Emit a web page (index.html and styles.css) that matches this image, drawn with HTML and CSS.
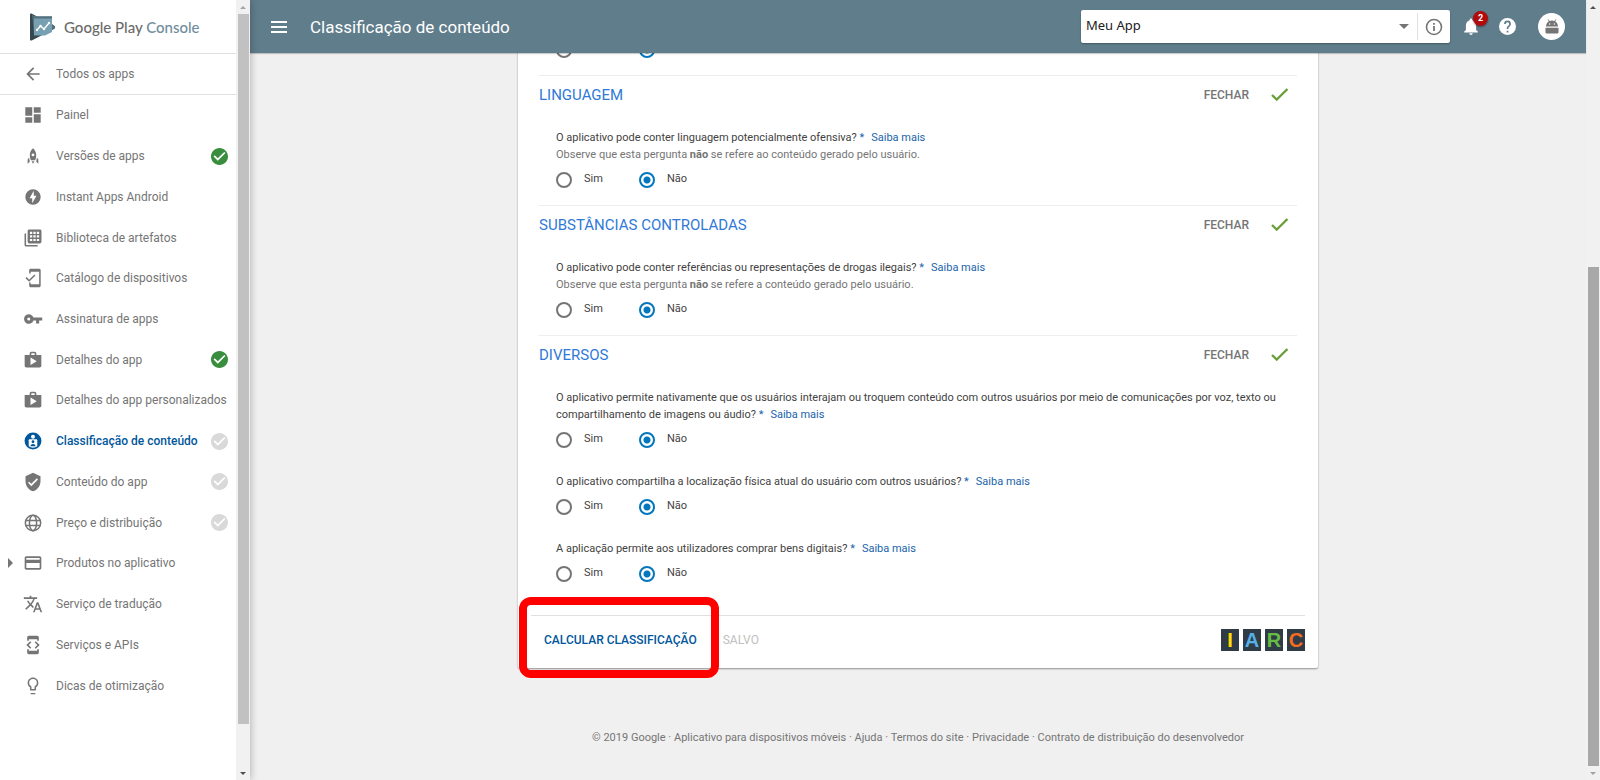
FILE: index.html
```html
<!DOCTYPE html>
<html lang="pt-BR">
<head>
<meta charset="utf-8">
<title>Classificação de conteúdo - Google Play Console</title>
<link rel="stylesheet" href="styles.css">
</head>
<body>
<svg class="sprite" aria-hidden="true">
  <symbol id="badge" viewBox="2 2 20 20"><path d="M12 2C6.500 2 2 6.500 2 12s4.500 10 10 10 10-4.500 10-10S17.500 2 12 2zm-2 15l-5-5 1.400-1.400L10 14.200l7.600-7.600L19 8l-9 9z"/></symbol>
  <symbol id="shop" viewBox="0 0 24 24"><path d="M16 6V4c0-1.100-.9-2-2-2h-4c-1.100 0-2 .9-2 2v2H2v13c0 1.100.9 2 2 2h16c1.100 0 2-.9 2-2V6h-6zm-6-2h4v2h-4V4zM9 18V9l7.500 4.500L9 18z"/></symbol>
  <symbol id="tick" viewBox="3 5 19 14"><path d="M9 15.800L4.800 11.600l-1.800 1.800L9 19.200 21.400 7l-1.800-1.800z"/></symbol>
</svg>
<div class="app">
  <aside class="sidebar">
    <div class="sidebar-body">
      <a class="brand" href="#">
        <svg class="brand-logo" viewBox="0 0 25 28"><path fill="#37474f" d="M1.500 0.500C.5.200 0 .8 0 2v24c0 1.200.6 1.900 1.700 1.500L24 16c1.300-.8 1.300-2.500 0-3.200z"/><path fill="#546e7a" d="M2 .5L4 3.500h18V11l2 1.400c1.300.8 1.300 2.500 0 3.200L22 17 4 22z"/><path fill="#78a0b3" d="M4 3.500h18V19l-7 3.500H4z"/><path fill="#546e7a" d="M4 3.500h18v2H4z"/><path fill="none" stroke="#fff" stroke-width="1.300" d="M7 17l3.500-4 3.500 3 5-6"/><g fill="#fff"><circle cx="7" cy="17" r="1.200"/><circle cx="10.500" cy="13" r="1.200"/><circle cx="14" cy="16" r="1.200"/><circle cx="19" cy="10" r="1.200"/></g></svg>
        <span>Google Play <span class="brand-sub">Console</span></span>
      </a>
      <a class="nav-item back" href="#"><svg class="icon" viewBox="0 0 24 24"><path d="M20 11H7.800l5.600-5.600L12 4l-8 8 8 8 1.400-1.400L7.800 13H20z"/></svg><span>Todos os apps</span></a>
      <nav class="nav">
        <a class="nav-item" href="#"><svg class="icon" viewBox="-1 -1 26 26"><path d="M2 13h9V2H2v11zm0 9h9v-7H2v7zm11 0h9V11h-9v11zm0-20v7h9V2h-9z"/></svg><span>Painel</span></a>
        <a class="nav-item" href="#"><svg class="icon" viewBox="-2 -2 28 28"><path fill-rule="evenodd" d="M12 1C9 3.500 7.500 7 7.500 11c0 2.600.5 5 1.500 7h6c1-2 1.500-4.400 1.500-7 0-4-1.500-7.500-4.500-10zm0 7.500a2 2 0 1 1 0 4 2 2 0 0 1 0-4zM6.500 14L4.500 17v6l3-3zM17.500 14l2 3v6l-3-3zM10 19.500h4L12 23z"/></svg><span>Versões de apps</span><svg class="status done"><use href="#badge"/></svg></a>
        <a class="nav-item" href="#"><svg class="icon" viewBox="-1 -1 26 26"><path fill-rule="evenodd" d="M12 2a10 10 0 1 0 0 20 10 10 0 0 0 0-20zm-1 18v-6.500H7.500L13 4v6.500h3.500z"/></svg><span>Instant Apps Android</span></a>
        <a class="nav-item" href="#"><svg class="icon" viewBox="-1 -1 26 26"><path fill-rule="evenodd" d="M1 6h2v15h15v2H3c-1.100 0-2-.9-2-2zM7 1h14c1.100 0 2 .9 2 2v14c0 1.100-.9 2-2 2H7c-1.100 0-2-.9-2-2V3c0-1.100.9-2 2-2zm1 3v2.700h3V4zm4.500 0v2.700h3V4zM17 4v2.700h3V4zM8 8.500v3h3v-3zm4.500 0v3h3v-3zm4.500 0v3h3v-3zM8 13.300V16h3v-2.700zm4.500 0V16h3v-2.700zm4.500 0V16h3v-2.700z"/></svg><span>Biblioteca de artefatos</span></a>
        <a class="nav-item" href="#"><svg class="icon" viewBox="-1 -1 26 26"><path d="M20 0H9C7.900 0 7 .9 7 2v4h2V4h11v16H9v-2H7v4c0 1.100.9 2 2 2h11c1.100 0 2-.9 2-2V2c0-1.100-.9-2-2-2z"/><path fill="none" stroke="currentColor" stroke-width="2" d="M3 11.500l4 4L14.500 8"/></svg><span>Catálogo de dispositivos</span></a>
        <a class="nav-item" href="#"><svg class="icon" viewBox="-1 -1 26 26"><path fill-rule="evenodd" d="M12.600 10A6.300 6.300 0 1 0 12.600 14H16v4h4v-4h4v-4zM6.500 14a2 2 0 1 1 0-4 2 2 0 0 1 0 4z"/></svg><span>Assinatura de apps</span></a>
        <a class="nav-item" href="#"><svg class="icon"><use href="#shop"/></svg><span>Detalhes do app</span><svg class="status done"><use href="#badge"/></svg></a>
        <a class="nav-item" href="#"><svg class="icon"><use href="#shop"/></svg><span>Detalhes do app personalizados</span></a>
        <a class="nav-item active" href="#"><svg class="icon" viewBox="-2 -2 28 28"><circle cx="12" cy="12" r="11.800"/><circle cx="12" cy="6" r="2.800" fill="#fff"/><path fill="#fff" d="M7.500 9.500h9c1 0 1.500.6 1.500 1.500v8.500c-3.500 2.500-8.500 2.500-12 0V11c0-.9.500-1.500 1.500-1.500z"/><circle cx="12" cy="13" r="2"/><path d="M8.500 19.500c0-4.500 7-4.500 7 0z"/></svg><span>Classificação de conteúdo</span><svg class="status"><use href="#badge"/></svg></a>
        <a class="nav-item" href="#"><svg class="icon" viewBox="0 0 24 24"><path d="M12 1L3 5v6c0 5.500 3.800 10.700 9 12 5.200-1.300 9-6.500 9-12V5l-9-4zm-2 16l-4-4 1.400-1.400L10 14.200l6.600-6.600L18 9l-8 8z"/></svg><span>Conteúdo do app</span><svg class="status"><use href="#badge"/></svg></a>
        <a class="nav-item" href="#"><svg class="icon" viewBox="0 0 24 24"><g fill="none" stroke="currentColor" stroke-width="1.800"><circle cx="12" cy="12" r="9.200"/><ellipse cx="12" cy="12" rx="4.300" ry="9.200"/><path d="M3 9h18M3 15h18"/></g></svg><span>Preço e distribuição</span><svg class="status"><use href="#badge"/></svg></a>
        <a class="nav-item expandable" href="#"><svg class="icon" viewBox="0 0 24 24"><path d="M20 4H4c-1.100 0-2 .9-2 2v12c0 1.100.9 2 2 2h16c1.100 0 2-.9 2-2V6c0-1.100-.9-2-2-2zm0 14H4v-6h16v6zm0-10H4V6h16v2z"/></svg><span>Produtos no aplicativo</span></a>
        <a class="nav-item" href="#"><svg class="icon" viewBox="0 0 24 24"><path d="M12.870 15.070l-2.540-2.510.03-.03A17.500 17.500 0 0 0 14.070 6H17V4h-7V2H8v2H1v2h11.200a15.700 15.700 0 0 1-3.200 5.400A15.600 15.600 0 0 1 6.700 8h-2c.7 1.600 1.700 3.200 3 4.600L2.600 17.600 4 19l5-5 3.100 3.100zM18.500 10h-2L12 22h2l1.100-3h4.800l1.100 3h2zm-2.600 7l1.600-4.300 1.600 4.300z"/></svg><span>Serviço de tradução</span></a>
        <a class="nav-item" href="#"><svg class="icon" viewBox="0 0 24 24"><path d="M7 5h10v2h2V3c0-1.100-.9-2-2-2H7c-1.100 0-2 .9-2 2v4h2zm8.400 11.600L20 12l-4.600-4.600L14 8.800l3.200 3.200-3.200 3.200zM10 15.200L6.800 12 10 8.800 8.600 7.400 4 12l4.600 4.600zM17 19H7v-2H5v4c0 1.100.9 2 2 2h10c1.100 0 2-.9 2-2v-4h-2z"/></svg><span>Serviços e APIs</span></a>
        <a class="nav-item" href="#"><svg class="icon" viewBox="-1 -1 26 26"><path fill-rule="evenodd" d="M9 21h6v1.800H9zM12 1C8.100 1 5 4.100 5 8c0 2.400 1.200 4.500 3 5.700V17c0 .6.400 1 1 1h6c.6 0 1-.4 1-1v-3.300c1.800-1.200 3-3.300 3-5.700 0-3.900-3.100-7-7-7zm2.800 11.100l-.8.600V16h-4v-3.300l-.8-.6A5 5 0 0 1 7 8a5 5 0 0 1 10 0 5 5 0 0 1-2.200 4.100z"/></svg><span>Dicas de otimização</span></a>
      </nav>
    </div>
    <div class="scrollbar side-scroll"><i class="arrow up muted"></i><i class="thumb"></i><i class="arrow down"></i></div>
  </aside>

  <div class="main">
    <header class="topbar">
      <button class="icon-btn menu" aria-label="Menu"><svg viewBox="0 0 16 12"><path d="M0 1h16M0 6h16M0 11h16" stroke="currentColor" stroke-width="1.800"/></svg></button>
      <h1>Classificação de conteúdo</h1>
      <div class="app-picker">
        <select aria-label="Aplicativo"><option>Meu App</option></select>
        <button class="icon-btn info" aria-label="Informações"><svg viewBox="0 0 18 18"><circle cx="9" cy="9" r="7.500" fill="none" stroke="currentColor" stroke-width="1.600"/><path fill="currentColor" d="M8.100 8h1.800v5H8.100zM8.100 5h1.800v1.800H8.100z"/></svg></button>
      </div>
      <button class="icon-btn bell" aria-label="Notificações"><svg viewBox="4 2 16 20"><path fill="currentColor" d="M12 22c1.100 0 2-.9 2-2h-4c0 1.100.9 2 2 2zm6-6v-5c0-3.100-1.600-5.600-4.500-6.300V4a1.500 1.500 0 0 0-3 0v.7C7.600 5.400 6 7.900 6 11v5l-2 2v1h16v-1z"/></svg><span class="count">2</span></button>
      <button class="icon-btn help" aria-label="Ajuda"><svg viewBox="2 2 20 20"><path fill="currentColor" d="M12 2a10 10 0 1 0 0 20 10 10 0 0 0 0-20zm1 17h-2v-2h2v2zm2.100-7.700l-.9.900c-.8.700-1.200 1.300-1.200 2.800h-2v-.5c0-1.100.5-2.100 1.200-2.800l1.200-1.300c.4-.3.600-.8.600-1.400a2 2 0 0 0-4 0H8a4 4 0 0 1 8 0c0 .9-.4 1.700-.9 2.300z"/></svg></button>
      <button class="icon-btn avatar" aria-label="Conta"><svg viewBox="0 0 14 15"><path fill="#757575" fill-rule="evenodd" d="M1 7.500C1 5 2.200 3.400 3.800 2.400L2.600.6 3.200.2l1.300 1.900a6.500 6.500 0 0 1 5 0L10.800.2l.6.400-1.200 1.800C11.800 3.400 13 5 13 7.500zM4.700 4.300a.7.700 0 1 0 0 1.400.7.700 0 0 0 0-1.400zm4.600 0a.7.700 0 1 0 0 1.400.7.700 0 0 0 0-1.400zM.5 8.800h13V13c0 1-.6 1.500-1.500 1.500H2C1 14.500.5 14 .5 13z"/></svg></button>
    </header>

    <main class="content">
      <form class="card">
        <div class="sections">
          <section class="section previous">
            <div class="options"><label><input type="radio" name="q0">Sim</label><label><input type="radio" name="q0" checked>Não</label></div>
          </section>
          <section class="section">
            <div class="section-head"><h2>LINGUAGEM</h2><button type="button" class="close">FECHAR</button><svg class="tick"><use href="#tick"/></svg></div>
            <div class="question">
              <p>O aplicativo pode conter linguagem potencialmente ofensiva? <span class="req">*</span><a href="#">Saiba mais</a></p>
              <p class="note">Observe que esta pergunta <b>não</b> se refere ao conteúdo gerado pelo usuário.</p>
              <div class="options"><label><input type="radio" name="q1">Sim</label><label><input type="radio" name="q1" checked>Não</label></div>
            </div>
          </section>
          <section class="section">
            <div class="section-head"><h2>SUBSTÂNCIAS CONTROLADAS</h2><button type="button" class="close">FECHAR</button><svg class="tick"><use href="#tick"/></svg></div>
            <div class="question">
              <p>O aplicativo pode conter referências ou representações de drogas ilegais? <span class="req">*</span><a href="#">Saiba mais</a></p>
              <p class="note">Observe que esta pergunta <b>não</b> se refere a conteúdo gerado pelo usuário.</p>
              <div class="options"><label><input type="radio" name="q2">Sim</label><label><input type="radio" name="q2" checked>Não</label></div>
            </div>
          </section>
          <section class="section">
            <div class="section-head"><h2>DIVERSOS</h2><button type="button" class="close">FECHAR</button><svg class="tick"><use href="#tick"/></svg></div>
            <div class="question">
              <p>O aplicativo permite nativamente que os usuários interajam ou troquem conteúdo com outros usuários por meio de comunicações por voz, texto ou compartilhamento de imagens ou áudio? <span class="req">*</span><a href="#">Saiba mais</a></p>
              <div class="options"><label><input type="radio" name="q3">Sim</label><label><input type="radio" name="q3" checked>Não</label></div>
            </div>
            <div class="question">
              <p>O aplicativo compartilha a localização física atual do usuário com outros usuários? <span class="req">*</span><a href="#">Saiba mais</a></p>
              <div class="options"><label><input type="radio" name="q4">Sim</label><label><input type="radio" name="q4" checked>Não</label></div>
            </div>
            <div class="question">
              <p>A aplicação permite aos utilizadores comprar bens digitais? <span class="req">*</span><a href="#">Saiba mais</a></p>
              <div class="options"><label><input type="radio" name="q5">Sim</label><label><input type="radio" name="q5" checked>Não</label></div>
            </div>
          </section>
        </div>
        <div class="card-foot">
          <div class="calc"><button type="submit">CALCULAR CLASSIFICAÇÃO</button><span class="highlight"></span></div>
          <button type="button" class="saved" disabled>SALVO</button>
          <div class="iarc"><span class="i">I</span><span class="a">A</span><span class="r">R</span><span class="c">C</span></div>
        </div>
      </form>
      <footer class="legal">© 2019 Google · <a href="#">Aplicativo para dispositivos móveis</a> · <a href="#">Ajuda</a> · <a href="#">Termos do site</a> · <a href="#">Privacidade</a> · <a href="#">Contrato de distribuição do desenvolvedor</a></footer>
    </main>
  </div>
  <div class="scrollbar page-scroll"><i class="arrow up"></i><i class="thumb"></i><i class="arrow down muted"></i></div>
</div>
</body>
</html>
```
FILE: styles.css
```css
* { box-sizing: border-box; }
body { margin: 0; font-family: Roboto, "Liberation Sans", sans-serif; font-size: 11px; color: #424242; background: #f0f0f0; }
a { color: inherit; text-decoration: none; }
button { font: inherit; color: inherit; background: none; border: 0; padding: 0; }
h1, h2, p { margin: 0; font-weight: 400; }
.sprite { display: none; }

.app { display: flex; height: 100vh; overflow: hidden; }

/* Sidebar */
.sidebar { position: relative; z-index: 2; display: flex; flex: 0 0 250px; background: #fff; box-shadow: 0 0 8px rgba(0, 0, 0, .3); }
.sidebar-body { flex: 1; min-width: 0; }
.brand { display: flex; align-items: center; gap: 9px; height: 54px; padding-left: 30px; border-bottom: 1px solid #e0e0e0; font-family: Lato, sans-serif; font-size: 15px; font-weight: 500; color: #6b6b6b; white-space: nowrap; }
.brand-logo { width: 25px; height: 28px; }
.brand-sub { color: #6f8d9d; }
.nav { display: grid; grid-auto-rows: 1fr; height: 611px; }
.nav-item { position: relative; display: flex; align-items: center; padding: 0 8px 0 23px; font-size: 12px; color: #757575; white-space: nowrap; }
.nav-item.back { height: 41px; border-bottom: 1px solid #e0e0e0; }
.icon { flex: none; width: 20px; height: 20px; margin-right: 13px; fill: currentColor; }
.status { width: 17px; height: 17px; margin-left: auto; fill: #d9d9d9; }
.status.done { fill: #388e3c; }
.nav-item.active { color: #01579b; font-weight: 500; }
.expandable::before { content: ""; position: absolute; left: 8px; border: 5px solid transparent; border-left-color: #757575; border-right: 0; }

/* Scrollbars */
.scrollbar { display: flex; flex-direction: column; align-items: center; flex: 0 0 14px; background: #f1f1f1; }
.thumb { width: 11px; background: #c1c1c1; }
.arrow { height: 14px; display: grid; place-items: center; }
.arrow::after { content: ""; border: 3px solid transparent; }
.arrow.up::after { border-bottom-color: #505050; border-top: 0; }
.arrow.down::after { border-top-color: #505050; border-bottom: 0; }
.arrow.up.muted::after { border-bottom-color: #a3a3a3; }
.arrow.down.muted::after { border-top-color: #a3a3a3; }
.arrow.down { margin-top: auto; }
.side-scroll .thumb { height: 91%; }
.page-scroll .thumb { height: 64%; margin-top: auto; background: #a8a8a8; }
.page-scroll .arrow.down { margin-top: 0; }

/* Top bar */
.main { flex: 1; min-width: 0; display: flex; flex-direction: column; }
.topbar { position: relative; z-index: 1; display: flex; flex: none; align-items: center; height: 53px; padding: 0 21px; background: #607d8b; color: #fff; box-shadow: 0 1px 1px rgba(0, 0, 0, .2); }
.topbar h1 { margin: 0 auto 0 23px; font-size: 17px; }
.icon-btn { display: grid; place-items: center; }
.menu svg { width: 16px; height: 12px; }
.app-picker { position: relative; display: flex; align-items: center; width: 369px; height: 33px; background: #fff; border-radius: 2px; box-shadow: 0 1px 2px rgba(0, 0, 0, .3); }
.app-picker select { flex: 1; height: 27px; padding: 0 5px 3px; border: 0; border-right: 1px solid #e0e0e0; appearance: none; background: none; font: 13px "Noto Sans", sans-serif; color: #212121; }
.app-picker::after { content: ""; position: absolute; right: 41px; border: 5px solid transparent; border-top-color: #757575; border-bottom: 0; pointer-events: none; }
.info { width: 32px; color: #757575; }
.info svg { width: 18px; height: 18px; }
.bell { position: relative; margin-left: 14px; }
.bell svg { width: 14px; height: 17px; }
.count { position: absolute; left: 9px; top: -7px; width: 15px; height: 15px; border-radius: 50%; background: #b00c0c; font-size: 9px; font-weight: 700; line-height: 15px; box-shadow: 0 1px 2px rgba(0, 0, 0, .4); }
.help { margin-left: 21px; }
.help svg { width: 17px; height: 17px; }
.avatar { width: 27px; height: 27px; margin-left: 22px; border-radius: 50%; background: #fff; }
.avatar svg { width: 14px; height: 15px; }

/* Questionnaire card */
.content { flex: 1; min-height: 0; overflow: hidden; }
.card { max-width: 800px; margin: -20px auto 0; background: #fff; border-radius: 2px; box-shadow: 0 1px 2px rgba(0, 0, 0, .4); }
.sections { padding: 0 21px; }
.section { border-top: 1px solid #eee; }
.section.previous { border: 0; padding: 0 17px 16px; }
.section-head { display: flex; align-items: center; height: 37px; padding-right: 8px; }
.section-head h2 { flex: 1; font-size: 15px; color: #3079d8; }
.close { font-size: 12px; font-weight: 500; color: #757575; }
.tick { width: 18px; height: 13px; margin-left: 22px; fill: #689f38; }
.question { padding: 16px 17px; line-height: 17px; }
.question + .question { padding-top: 8px; }
.req, .question a { color: #1a63ab; }
.question a { margin-left: 7px; }
.note { color: #757575; }
.options { display: flex; padding-top: 8px; }
.options label { display: flex; align-items: flex-start; width: 83px; height: 18px; line-height: 16px; }
.options input { appearance: none; width: 16px; height: 16px; margin: 1px 12px 0 0; border: 2px solid #757575; border-radius: 50%; }
.options input:checked { border-color: #0277bd; background: radial-gradient(circle, #0277bd 0 3px, transparent 4px); }
.card-foot { display: flex; align-items: center; height: 53px; margin: 16px 13px 0; padding-bottom: 5px; border-top: 1px solid #e0e0e0; font-size: 12px; font-weight: 500; }
.calc { position: relative; padding-left: 13px; color: #01579b; }
.highlight { position: absolute; left: -12px; top: -36px; width: 200px; height: 81px; border: 8px solid #f00; border-radius: 12px; pointer-events: none; }
.saved { margin-left: 26px; font-weight: 400; color: #c0c0c0; }
.iarc { display: flex; gap: 4px; margin-left: auto; font: 700 20px/22px "Liberation Sans", sans-serif; text-align: center; }
.iarc span { width: 18px; background: #2f3b45; }
.i { color: #ffdf00; }
.a { color: #56b0e6; }
.r { color: #66bb44; }
.c { color: #f36c21; }
.legal { margin-top: 61px; text-align: center; line-height: 17px; color: #757575; }
```
